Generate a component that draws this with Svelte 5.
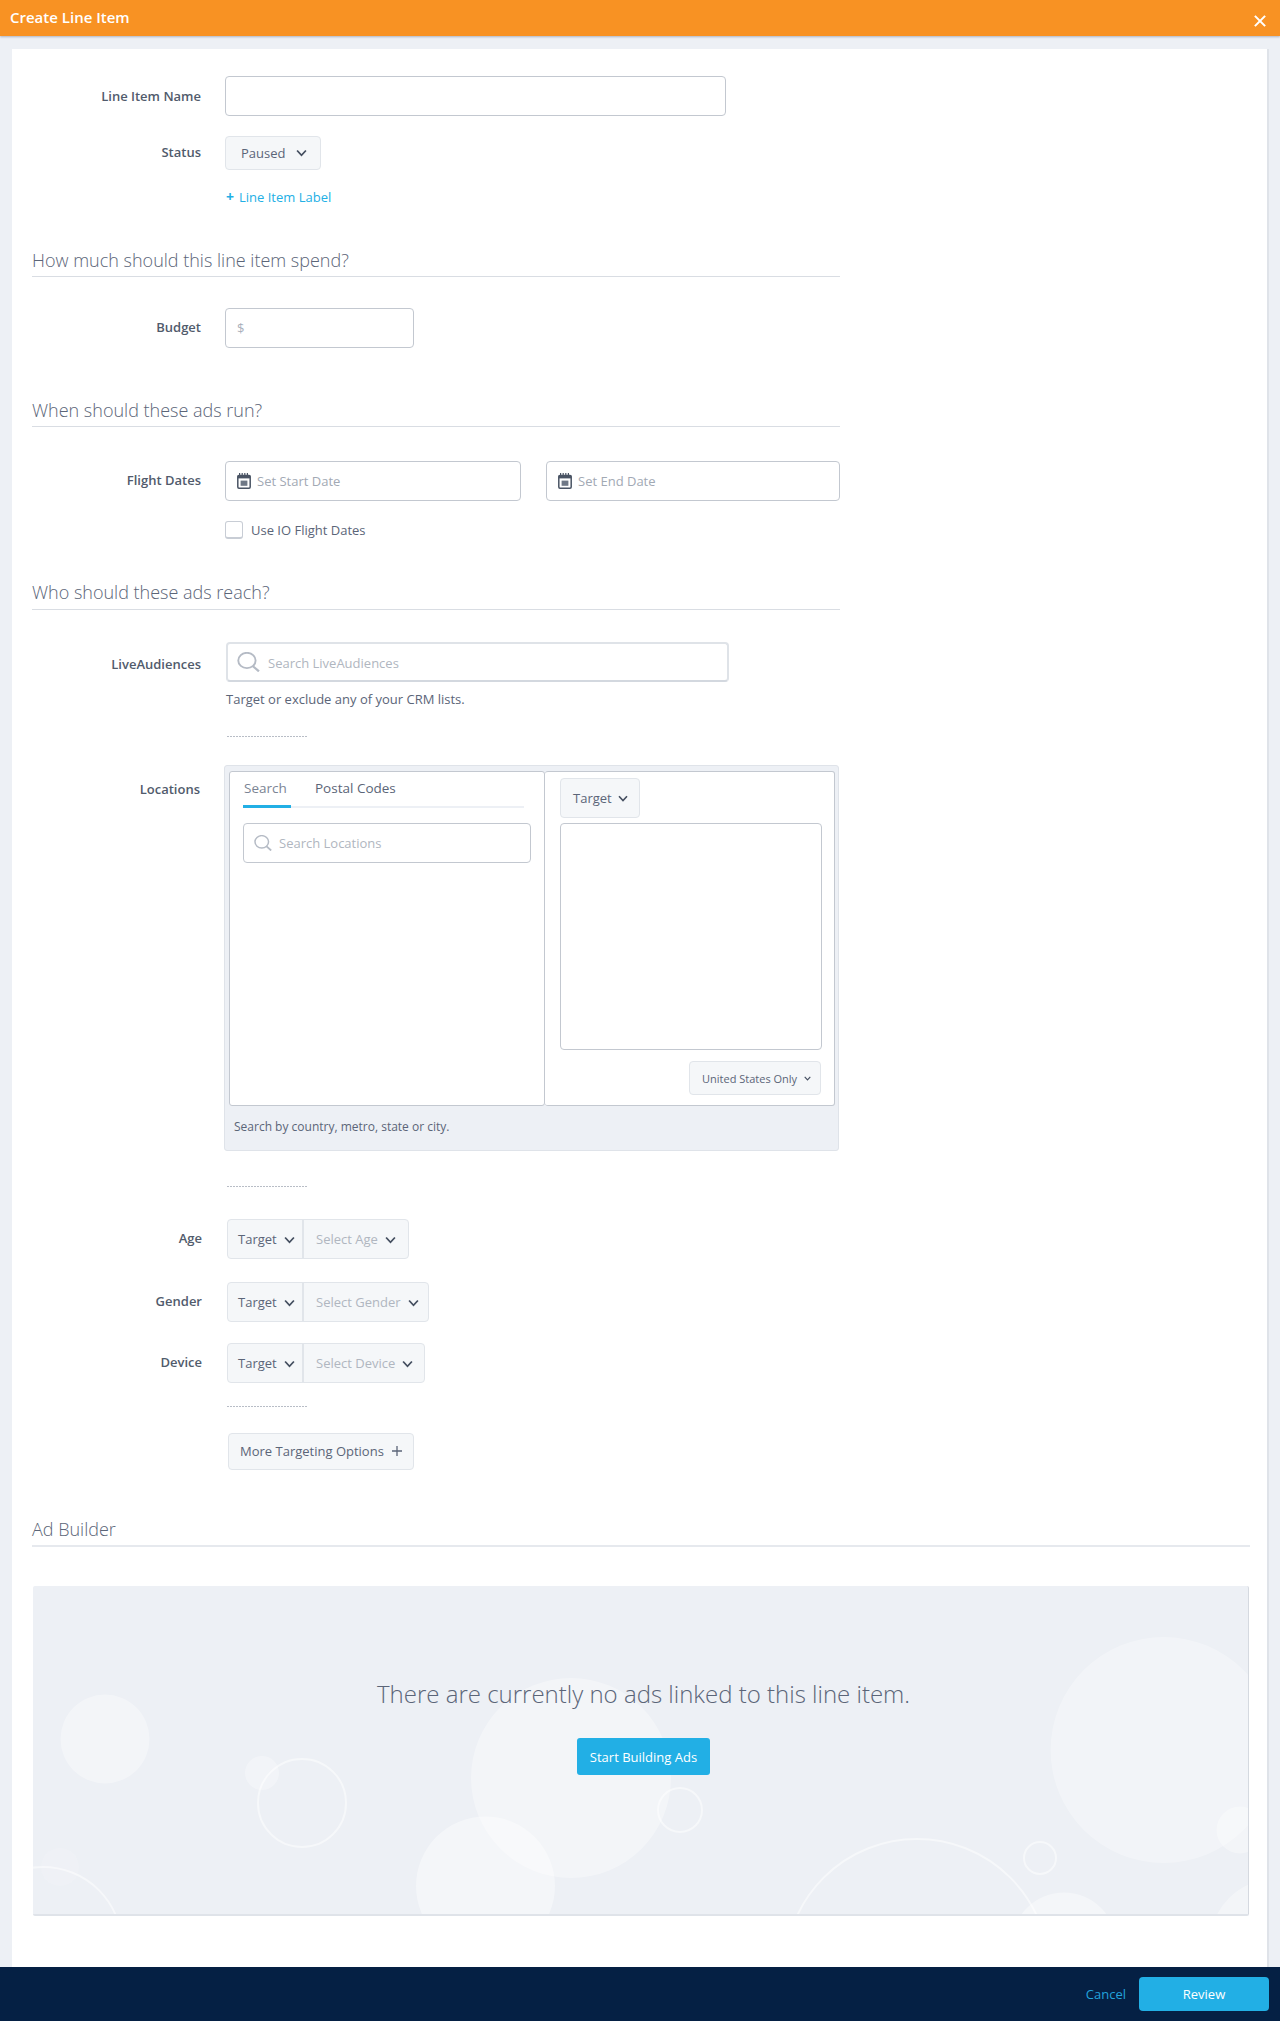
<script>
  const filled = [
    [105, 1740, 44.5, .35], [262, 1774, 17, .3], [571, 1779, 100, .35], [485.5, 1887, 69.5, .4],
    [1163.6, 1751, 113, .3], [1240, 1831, 23.5, .35], [1064, 1946, 52.5, .4], [1275, 1945, 65, .35], [60, 1868, 19, .12]
  ];
  const rings = [
    [302, 1804, 44], [680, 1811, 22], [917, 1972, 132], [1040, 1859, 16], [43, 1947, 79]
  ];
  const ox = 33, oy = 1587;
  const demo = [
    { label: 'Age', placeholder: 'Select Age', cls: 'first' },
    { label: 'Gender', placeholder: 'Select Gender', cls: 'second' },
    { label: 'Device', placeholder: 'Select Device', cls: 'third' }
  ];
</script>

{#snippet chevron(w = 10)}
  <svg class="chev" width={w} height={Math.round(w * 0.7)} viewBox="0 0 10 7" aria-hidden="true"><path d="M1 1.2 5 5.6 9 1.2" fill="none" stroke="#454f60" stroke-width="1.6"/></svg>
{/snippet}
{#snippet calendar()}
  <svg class="cal" width="14" height="16" viewBox="0 0 14 16" aria-hidden="true">
    <rect x="0.8" y="2.4" width="12.4" height="12.8" rx="1.2" fill="#fff" stroke="#4a5464" stroke-width="1.5"/>
    <rect x="0.8" y="2.4" width="12.4" height="3" fill="#4a5464"/>
    <path d="M2.6 0v3.2M5.2 0v3.2M7.8 0v3.2M10.4 0v3.2" stroke="#4a5464" stroke-width="1.2"/>
    <rect x="3.6" y="7.6" width="6.8" height="5.2" fill="#6f7886"/>
  </svg>
{/snippet}
{#snippet search(w, h)}
  <svg width={w} height={h} viewBox="0 0 22 20" preserveAspectRatio="none" aria-hidden="true">
    <ellipse cx="9.5" cy="8.5" rx="8.3" ry="7.7" fill="none" stroke="#b5bbc5" stroke-width="1.8"/>
    <path d="M15 14l6 5.4" stroke="#b5bbc5" stroke-width="2.2"/>
  </svg>
{/snippet}

<div class="page">
  <header class="top">
    <span class="title">Create Line Item</span>
    <svg width="12" height="12" viewBox="0 0 11 11" aria-label="Close"><path d="M.8.8l9.4 9.4M10.2.8.8 10.2" stroke="#fff" stroke-width="1.9"/></svg>
  </header>

  <main class="sheet">
    <div class="row name-row">
      <span class="label">Line Item Name</span>
      <input class="field w-name" type="text" />
    </div>
    <div class="row status-row">
      <span class="label status-label">Status</span>
      <button class="btn status">Paused {@render chevron(11)}</button>
    </div>
    <div class="row link-row">
      <span></span>
      <a class="link" href="#label"><b>+</b><span>Line Item Label</span></a>
    </div>

    <h2 class="head spend-head">How much should this line item spend?</h2>
    <div class="row budget-row">
      <span class="label budget-label">Budget</span>
      <input class="field w-budget" type="text" placeholder="$" />
    </div>

    <h2 class="head when-head">When should these ads run?</h2>
    <div class="row flight-row">
      <span class="label">Flight Dates</span>
      <div class="dates">
        <div class="field date date-a">{@render calendar()}<span>Set Start Date</span></div>
        <div class="field date date-b">{@render calendar()}<span>Set End Date</span></div>
      </div>
    </div>
    <div class="row check-row">
      <span></span>
      <label class="check"><span class="box"></span>Use IO Flight Dates</label>
    </div>

    <h2 class="head who-head">Who should these ads reach?</h2>
    <div class="row live-row">
      <span class="label">LiveAudiences</span>
      <div>
        <div class="field search live">{@render search(23, 20)}<span class="ph">Search LiveAudiences</span></div>
        <p class="help">Target or exclude any of your CRM lists.</p>
      </div>
    </div>
    <div class="row"><span></span><div class="dots dots-a"></div></div>

    <div class="row loc-row">
      <span class="label loc-label">Locations</span>
      <div class="loc">
        <div class="loc-inner">
          <div class="loc-left">
            <div class="tabs">
              <span class="tab active">Search</span>
              <span class="tab">Postal Codes</span>
            </div>
            <div class="field search locs">{@render search(18, 16)}<span class="ph">Search Locations</span></div>
          </div>
          <div class="loc-right">
            <button class="btn target">Target {@render chevron()}</button>
            <div class="list"></div>
            <button class="btn us">United States Only {@render chevron(7)}</button>
          </div>
        </div>
        <p class="loc-help">Search by country, metro, state or city.</p>
      </div>
    </div>
    <div class="row"><span></span><div class="dots dots-b"></div></div>

    {#each demo as d}
      <div class="row demo {d.cls}">
        <span class="label">{d.label}</span>
        <div class="combo">
          <span class="seg seg-t">Target {@render chevron(11)}</span>
          <span class="seg seg-s"><span class="ph">{d.placeholder}</span>{@render chevron(11)}</span>
        </div>
      </div>
    {/each}
    <div class="row"><span></span><div class="dots dots-c"></div></div>
    <div class="row more-row">
      <span></span>
      <button class="btn more">More Targeting Options
        <svg width="10" height="10" viewBox="0 0 10 10" aria-hidden="true"><path d="M5 0v10M0 5h10" stroke="#5b6578" stroke-width="1.3"/></svg>
      </button>
    </div>

    <h2 class="head ad-head">Ad Builder</h2>
    <section class="builder">
      <svg class="bubbles" width="1216" height="329" viewBox="0 0 1216 329" aria-hidden="true">
        {#each filled as c}
          <circle cx={c[0] - ox} cy={c[1] - oy} r={c[2]} fill="#fff" fill-opacity={c[3]} />
        {/each}
        {#each rings as c}
          <circle cx={c[0] - ox} cy={c[1] - oy} r={c[2]} fill="none" stroke="#fff" stroke-opacity="0.5" stroke-width="2" />
        {/each}
      </svg>
      <p class="empty">There are currently no ads linked to this line item.</p>
      <button class="start">Start Building Ads</button>
    </section>
  </main>

  <footer class="foot">
    <a class="cancel" href="#cancel">Cancel</a>
    <button class="review">Review</button>
  </footer>
</div>

<style>
  :global(body) { margin: 0; background: #edf0f5; }
  .page { width: 1280px; height: 2021px; display: flex; flex-direction: column; font-family: "Open Sans", sans-serif; font-size: 13px; color: #5b6578; overflow: hidden; }
  .top { height: 36px; flex: none; box-sizing: border-box; background: #f89223; color: #fff; display: flex; justify-content: space-between; align-items: center; padding: 0 14px 0 10px; box-shadow: 0 1px 2px rgba(60,70,90,.35); position: relative; }
  .top svg { margin-top: 5px; }
  .title { font-size: 15px; font-weight: 600; margin-top: -2px; }
  .sheet { flex: 1; margin: 13px 11px 0 12px; padding: 27px 19px 0 20px; background: #fff; border-right: 2px solid #dfe3e9; box-sizing: border-box; }
  .row { display: grid; grid-template-columns: 169px auto; column-gap: 24px; justify-content: start; align-items: center; }
  .label { text-align: right; font-weight: 600; color: #515b6c; line-height: 20px; }
  .field { height: 40px; box-sizing: border-box; border: 1px solid #c3c8d0; border-radius: 4px; background: #fff; font: 13px "Open Sans", sans-serif; color: #5b6578; }
  input.field { padding: 0 11px; outline: none; display: block; }
  input.field::placeholder { color: #a9b0bb; }
  .w-name { width: 501px; }
  .w-budget { width: 189px; }
  .btn { font: 13px "Open Sans", sans-serif; color: #5b6578; background: #f5f7f9; border: 1px solid #e1e5ea; border-radius: 4px; display: inline-flex; align-items: center; justify-content: space-between; box-sizing: border-box; padding: 0 12px 0 15px; margin: 0; }
  .status-row { margin-top: 20px; }
  .status-label { margin-top: -2px; }
  .status { width: 96px; height: 34px; padding-right: 13px; }
  .link-row { margin-top: 17px; }
  .link { color: #22afe5; text-decoration: none; line-height: 20px; margin-left: 1px; display: flex; align-items: center; gap: 5px; }
  .link b { font-weight: 700; font-size: 14px; }
  .head { margin: 0; height: 32px; box-sizing: border-box; border-bottom: 1px solid #d9dde3; width: 808px; font-size: 18px; font-weight: 300; line-height: 30px; color: #5b6578; }
  .spend-head { margin-top: 38px; }
  .budget-row { margin-top: 31px; }
  .budget-label { margin-top: -3px; }
  .when-head { margin-top: 47px; }
  .flight-row { margin-top: 34px; }
  .flight-row .label { margin-top: -2px; }
  .dates { display: flex; gap: 25px; width: 616px; }
  .date { display: flex; align-items: center; gap: 6px; padding-left: 11px; color: #a2a9b4; }
  .date-a { width: 296px; }
  .date-b { width: 294px; }
  .cal { margin-top: -1px; }
  .check-row { margin-top: 20px; }
  .check { display: flex; align-items: center; gap: 8px; line-height: 18px; }
  .box { width: 18px; height: 18px; box-sizing: border-box; border: 1px solid #c8cdd5; border-bottom-width: 2px; border-radius: 3px; }
  .who-head { margin-top: 39px; line-height: 28px; }
  .live-row { margin-top: 32px; align-items: start; }
  .live-row .label { margin-top: 12px; }
  .search { display: flex; align-items: center; }
  .ph { color: #b0b6c0; }
  .live { width: 503px; margin-left: 1px; padding-left: 9px; gap: 8px; border: 2px solid #dfe3e8; border-bottom-color: #d3d8df; }
  .live .ph { margin-top: 1px; }
  .help { margin: 7px 0 0 1px; line-height: 20px; }
  .dots { width: 81px; margin-left: 2px; height: 1px; background: repeating-linear-gradient(90deg, #b8bdc6 0 2px, transparent 2px 3px); }
  .dots-a { margin-top: 27px; }
  .loc-row { margin-top: 28px; align-items: start; }
  .loc-label { margin-top: 14px; margin-right: 1px; }
  .loc { width: 615px; height: 386px; box-sizing: border-box; background: #edf0f5; border: 1px solid #dfe3e9; border-radius: 3px; padding: 5px 4px 0 4px; margin-left: -1px; }
  .loc-inner { display: flex; height: 335px; }
  .loc-left { width: 317px; box-sizing: border-box; background: #fff; border: 1px solid #c3c8d0; border-radius: 3px; padding: 0 13px; }
  .loc-right { width: 290px; box-sizing: border-box; background: #fff; border: 1px solid #c3c8d0; border-left: 0; border-radius: 3px; padding: 6px 13px 0 15px; display: flex; flex-direction: column; align-items: flex-start; }
  .tabs { display: flex; gap: 23px; width: 281px; border-bottom: 2px solid #edf0f5; height: 34px; }
  .tab { font-size: 13.5px; line-height: 33px; height: 36px; padding: 0 3px 0 1px; box-sizing: border-box; }
  .tab.active { color: #7b8494; border-bottom: 3px solid #22afe5; width: 48px; box-sizing: content-box; height: 33px; padding: 0; text-indent: 1px; }
  .locs { width: 288px; margin-top: 15px; padding-left: 10px; gap: 7px; }
  .target { width: 80px; height: 40px; padding: 0 11px 0 12px; }
  .list { width: 262px; height: 227px; box-sizing: border-box; border: 1px solid #c3c8d0; border-radius: 4px; margin-top: 5px; }
  .us { width: 132px; height: 34px; margin-top: 11px; align-self: flex-end; font-size: 11px; padding: 0 9px 0 12px; white-space: nowrap; }
  .loc-help { margin: 11px 0 0 5px; font-size: 12px; line-height: 20px; }
  .dots-b { margin-top: 35px; }
  .demo .label { margin-top: -3px; margin-right: -1px; }
  .demo.first { margin-top: 32px; }
  .demo.second { margin-top: 23px; }
  .demo.third { margin-top: 21px; }
  .combo { display: inline-flex; height: 40px; margin-left: 2px; box-sizing: border-box; background: #f5f7f9; border: 1px solid #e1e5ea; border-radius: 4px; }
  .seg { display: flex; align-items: center; justify-content: space-between; box-sizing: border-box; padding-bottom: 1px; }
  .seg-t { width: 76px; padding-right: 7px; padding-left: 10px; border-right: 2px solid #e1e5ea; }
  .seg-s { padding-right: 9px; padding-left: 12px; gap: 7px; }
  .first .seg-s { padding-right: 12px; }
  .third .seg-s { padding-right: 11px; }
  .seg .chev { margin-top: 2px; }
  .dots-c { margin-top: 23px; }
  .more-row { margin-top: 26px; }
  .more { width: 186px; height: 37px; margin-left: 3px; padding: 0 11px 1px; }
  .ad-head { margin-top: 44px; width: 1218px; height: 33px; border-bottom: 2px solid #e6e9ee; }
  .builder { position: relative; overflow: hidden; margin: 39px 0 0 1px; width: 1216px; height: 330px; box-sizing: border-box; background: #edf0f5; border-right: 1px solid #d5d9e0; border-bottom: 2px solid #dfe3e9; border-radius: 2px; display: flex; flex-direction: column; align-items: center; padding-top: 90px; }
  .bubbles { position: absolute; left: 0; top: 0; }
  .empty { position: relative; margin: 0 0 0 6px; font-size: 24px; font-weight: 300; line-height: 36px; color: #5b6578; }
  .start { position: relative; margin: 26px 0 0 6px; width: 133px; height: 37px; background: #22afe5; color: #fff; border: 0; border-radius: 3px; font: 13px "Open Sans", sans-serif; }
  .foot { height: 54px; flex: none; background: #052044; display: flex; justify-content: flex-end; align-items: center; padding: 0 11px 0 0; gap: 13px; position: relative; }
  .cancel { color: #22a3dc; text-decoration: none; font-size: 13px; }
  .review { width: 130px; height: 34px; background: #22afe5; color: #fff; border: 0; border-radius: 4px; font: 13px "Open Sans", sans-serif; }
</style>
